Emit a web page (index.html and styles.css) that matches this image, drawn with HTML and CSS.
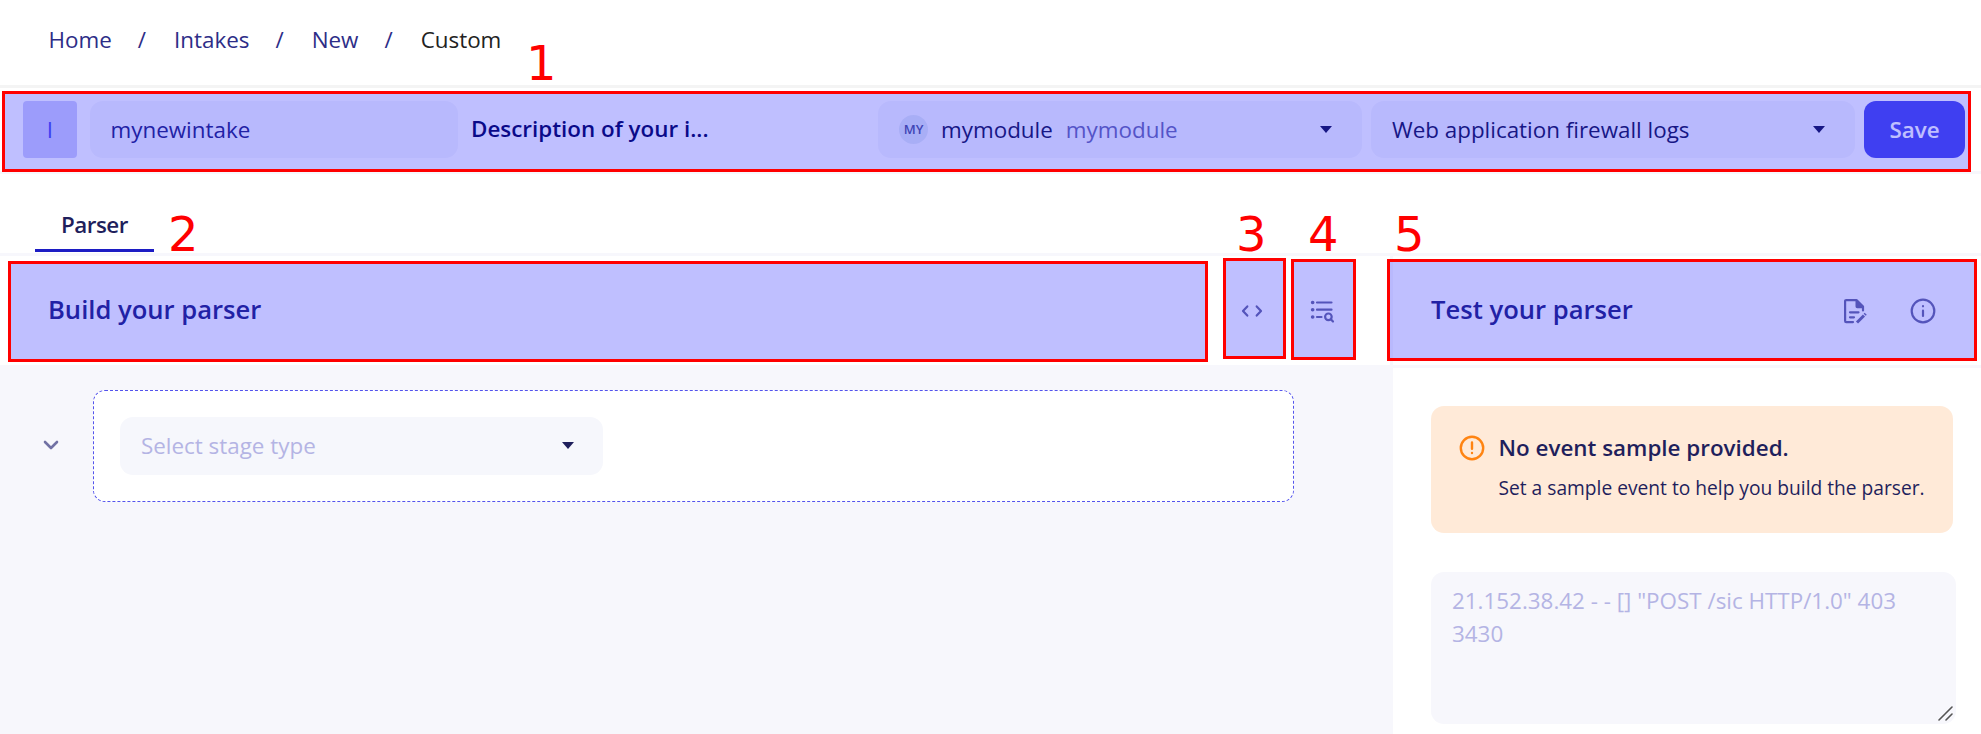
FILE: index.html
```html
<!DOCTYPE html>
<html lang="en">
<head>
<meta charset="utf-8">
<title>Custom intake</title>
<link rel="stylesheet" href="styles.css">
</head>
<body>
<nav class="crumbs">
  <a class="crumb-home">Home</a><span>/</span><a>Intakes</a><span>/</span><a>New</a><span>/</span><b>Custom</b>
</nav>

<header class="intake-bar">
  <div class="avatar">I</div>
  <div class="field name-field">mynewintake</div>
  <div class="description">Description of your i...</div>
  <div class="field select-field module-field">
    <span class="badge">MY</span><span class="module-name">mymodule</span><span class="module-slug">mymodule</span><i class="caret"></i>
  </div>
  <div class="field select-field format-field"><span>Web application firewall logs</span><i class="caret"></i></div>
  <button class="save">Save</button>
</header>

<div class="tabs"><div class="tab">Parser</div></div>

<main class="workspace">
  <section class="build">
    <div class="panel-head build-head">
      <h2>Build your parser</h2>
      <svg class="code-icon" width="24" height="24" viewBox="0 0 24 24"><path d="M7.3 7.4 3 12l4.300 4.600M16.700 7.400 21 12l-4.300 4.600"/></svg>
      <svg class="list-icon" width="26" height="26" viewBox="0 0 26 26"><path d="M8 4.500h14.500M8 11.700h14.500M8 19h4.500"/><path d="M3.600 4.500h.1M3.600 11.700h.1M3.600 19h.1" class="dots"/><circle cx="19.400" cy="18.800" r="3.300"/><path d="m21.800 21.200 2.200 2.300"/></svg>
    </div>
    <div class="build-body">
      <svg class="chevron" width="16" height="12" viewBox="0 0 16 12"><path d="m2 2 6 6 6-6"/></svg>
      <div class="stage">
        <div class="field select-field stage-type"><span>Select stage type</span><i class="caret"></i></div>
      </div>
    </div>
  </section>
  <section class="test">
    <div class="panel-head test-head">
      <h2>Test your parser</h2>
      <svg class="doc-icon" width="26" height="26" viewBox="0 0 26 26"><path d="M11 24.100H4.200Q3.100 24.100 3.100 23V3.200Q3.100 2.100 4.200 2.100H14.500L21 8.500V12.500"/><path class="solid" d="M13.500 1.500 21.800 9.300v1H15.200q-1.700 0-1.700-1.700z"/><path d="M8 14.300h8.500M8 19.300h4"/><path class="pencil" d="m15 24.500 7-7"/><path class="pencil" d="m22.700 16.800 1-1"/></svg>
      <svg class="info-icon" width="26" height="26" viewBox="0 0 26 26"><circle cx="13" cy="13" r="11.300"/><path d="M13 12.700v5.300M13 8.200v.1"/></svg>
    </div>
    <div class="test-body">
      <div class="alert">
        <svg width="26" height="26" viewBox="0 0 26 26"><circle cx="13" cy="13" r="11.200"/><path d="M13 7.500v6.200M13 18v.1"/></svg>
        <div>
          <h3>No event sample provided.</h3>
          <p>Set a sample event to help you build the parser.</p>
        </div>
      </div>
      <div class="sample">21.152.38.42 - - [] "POST /sic HTTP/1.0" 403 3430
        <svg class="grip" width="15" height="15" viewBox="0 0 15 15"><path d="M1 14 14 1M8 14l6-6"/></svg>
      </div>
    </div>
  </section>
</main>

<div class="mark mark-1"></div><span class="num num-1">1</span>
<div class="mark mark-2"></div><span class="num num-2">2</span>
<div class="mark mark-3"></div><span class="num num-3">3</span>
<div class="mark mark-4"></div><span class="num num-4">4</span>
<div class="mark mark-5"></div><span class="num num-5">5</span>
</body>
</html>
```
FILE: styles.css
```css
* { box-sizing: border-box; }
body {
  margin: 0;
  position: relative;
  width: 1981px;
  height: 734px;
  overflow: hidden;
  background: #fff;
  color: #1f1f5c;
  font-family: "Open Sans", "Noto Sans", sans-serif;
  font-size: 22.4px;
  line-height: 33px;
}
h2, h3, p { margin: 0; }
svg { fill: none; stroke-linecap: round; stroke-linejoin: round; flex: none; }

.crumbs {
  display: flex;
  align-items: center;
  gap: 27px;
  height: 88px;
  padding: 0 0 7px 48.5px;
  border-bottom: 3px solid #f4f4f4;
  color: #2d2d87;
}
.crumbs b { font-weight: 400; color: #222; }
.crumbs span { margin: 0 1px 0 -1px; }

.intake-bar {
  display: flex;
  align-items: center;
  height: 86px;
  padding: 0 16px 1px 23px;
  border-bottom: 3px solid #f7f7fc;
}
.avatar {
  width: 54px;
  height: 57px;
  border-radius: 4px;
  background: #d1d1fa;
  color: #5454ed;
  text-align: center;
  line-height: 58px;
}
.field {
  display: flex;
  align-items: center;
  height: 57px;
  border-radius: 13px;
  background: #f6f7fc;
}
.name-field { width: 368px; margin-left: 13px; padding-left: 20.5px; color: #2d2d87; }
.description { width: 407px; margin: -2px 0 0 13px; font-weight: 600; color: #0e0e62; }
.select-field { width: 484px; padding: 0 30px 0 21px; }
.module-field { margin-right: 9px; }
.caret {
  margin-left: auto;
  border: 6.5px solid transparent;
  border-top: 7px solid currentColor;
  border-bottom: 0;
}
.badge {
  width: 29px;
  height: 29px;
  border-radius: 50%;
  background: #e1e8f3;
  color: #565c9c;
  font-size: 13px;
  font-weight: 600;
  line-height: 29px;
  text-align: center;
}
.module-name { margin-left: 13px; }
.module-slug { margin-left: 13px; color: #7171b5; }
.save {
  width: 101px;
  height: 57px;
  margin-left: 9px;
  padding: 0;
  border: 0;
  border-radius: 12px;
  background: #5454ed;
  color: #fff;
  font: 600 22.4px/33px "Open Sans", "Noto Sans", sans-serif;
}

.tabs { height: 82px; padding: 20px 0 0 35px; border-bottom: 3px solid #f7f7fc; }
.tab {
  width: 119px;
  height: 58px;
  padding-top: 14px;
  border-bottom: 3px solid #1c1cc4;
  font-weight: 600;
  letter-spacing: -.5px;
  text-align: center;
}

.workspace { display: flex; height: 478px; }
.build { width: 1393px; border-right: 3px solid #f7f7fc; background: #f7f7fc; }
.test { flex: 1; }
.panel-head { display: flex; align-items: center; height: 109px; background: #fff; color: #2d2d87; }
.panel-head h2 { margin-top: 1px; font-size: 25.6px; font-weight: 600; line-height: 38px; }
.panel-head svg { stroke: #7171a4; stroke-width: 2.200; }
.build-head { padding: 0 0 2px 48px; }
.code-icon { margin: 2px 0 0 auto; }
.list-icon { margin: 3px 55px 0 45px; }
.list-icon .dots { stroke-width: 3.600; }
.test-head { height: 112px; padding: 0 45px 2px 38px; border-bottom: 3px solid #f7f7fc; }
.doc-icon { margin: 2px 0 0 auto; }
.doc-icon .solid { fill: #7171a4; stroke: none; }
.doc-icon .pencil { stroke-width: 3; stroke-linecap: butt; }
.info-icon { margin: 2px 0 0 42px; }

.build-body { display: flex; align-items: flex-start; padding: 25px 0 0 43px; }
.chevron { margin-top: 50px; stroke: #7171a4; stroke-width: 2.600; }
.stage {
  width: 1201px;
  height: 112px;
  margin-left: 34px;
  padding: 26px;
  border: 1px dashed #5454ed;
  border-radius: 12px;
  background: #fff;
}
.stage-type { width: 483px; height: 58px; padding: 0 29px 1px 21px; }
.stage-type span { color: #b4b4e4; }

.test-body { padding: 38px 25px 0 38px; }
.alert {
  display: flex;
  gap: 14px;
  width: 522px;
  height: 127px;
  padding: 25px 0 0 27.5px;
  border-radius: 13px;
  background: #ffead8;
}
.alert svg { margin-top: 4px; stroke: #ff8412; stroke-width: 2.400; }
.alert h3 { font-size: 22.4px; font-weight: 600; line-height: 33px; }
.alert p { margin-top: 9px; font-size: 19.2px; line-height: 30px; }
.sample {
  position: relative;
  width: 525px;
  height: 152px;
  margin-top: 39px;
  padding: 12px 40px 0 21px;
  border-radius: 13px;
  background: #f7f7fc;
  color: #b4b4e4;
}
.grip { position: absolute; right: 3px; bottom: 3px; stroke: #555; stroke-width: 1.600; }

/* Numbered callouts laid over the interface */
.mark { position: absolute; border: 3px solid #f00; background: rgba(0, 0, 255, .25); background-clip: padding-box; }
.mark-1 { left: 2px; top: 91px; width: 1969px; height: 81px; }
.mark-2 { left: 8px; top: 261px; width: 1200px; height: 101px; }
.mark-3 { left: 1223px; top: 258px; width: 63px; height: 101px; }
.mark-4 { left: 1291px; top: 259px; width: 65px; height: 101px; }
.mark-5 { left: 1387px; top: 259px; width: 590px; height: 102px; }
.num { position: absolute; color: #f00; font: 48px/48px "DejaVu Sans", sans-serif; }
.num-1 { left: 526px; top: 39px; }
.num-2 { left: 168px; top: 210px; }
.num-3 { left: 1236px; top: 210px; }
.num-4 { left: 1308px; top: 210px; }
.num-5 { left: 1394px; top: 210px; }
```
